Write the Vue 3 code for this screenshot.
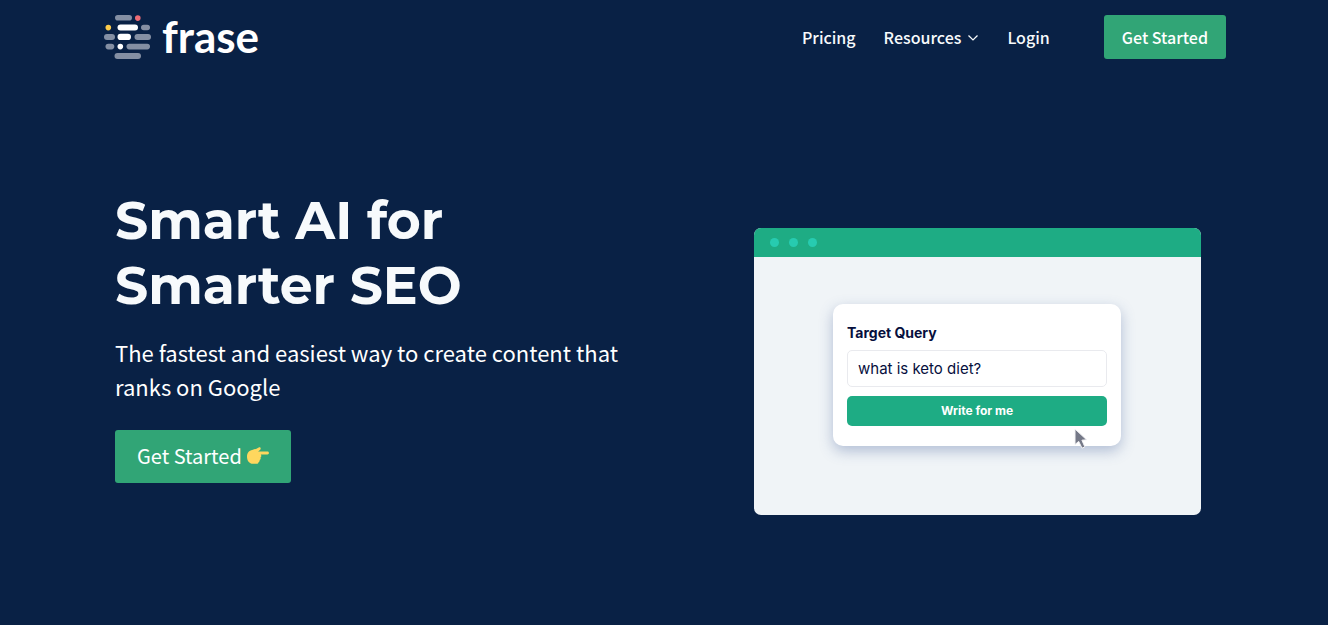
<template>
  <div class="page">
    <header class="site-header">
      <a class="logo" href="#" aria-label="frase">
        <svg class="logo-mark" viewBox="0 0 48 44" aria-hidden="true">
          <rect
            v-for="(bar, index) in logoBars"
            :key="index"
            :x="bar.x"
            :y="bar.y"
            :width="bar.width"
            :height="bar.height"
            :rx="bar.height / 2"
            :fill="bar.color"
          />
        </svg>
        <span class="logo-text">frase</span>
      </a>
      <nav class="nav">
        <a class="nav-link" href="#">Pricing</a>
        <button
          class="nav-link nav-toggle"
          type="button"
          :aria-expanded="resourcesOpen"
          @click="resourcesOpen = !resourcesOpen"
        >
          Resources
          <svg class="chevron" viewBox="0 0 12 12" aria-hidden="true">
            <path d="M1.5 4.5L6 8.9L10.5 4.5" />
          </svg>
        </button>
        <a class="nav-link" href="#">Login</a>
        <a class="btn nav-btn" href="#">Get Started</a>
      </nav>
    </header>

    <main class="hero">
      <section class="hero-text">
        <h1 class="title">Smart AI for<br />Smarter SEO</h1>
        <p class="subtitle">
          The fastest and easiest way to create content that ranks on Google
        </p>
        <a class="btn hero-btn" href="#">
          Get Started
          <svg class="hand" viewBox="0 0 24 20" aria-hidden="true">
            <path
              d="M1 10.5C1 6.5 3.2 4.5 6.2 3.9C8.5 3.2 10.8 2.8 12.7 1.5C13.8 .7 15.1 1.7 14.6 3C14.3 3.9 13.2 4.9 12 5.6H21.5C23.4 5.6 23.4 8.5 21.5 8.5H14.8C15.6 9.4 15.5 10.8 14.5 11.4C15 12.5 14.6 13.6 13.6 14C13.9 15 13.4 16 12.5 16.2C12.4 17.1 11.7 17.8 10.5 17.8H7C3.2 17.8 1 14.7 1 10.5Z"
            />
          </svg>
        </a>
      </section>

      <section class="window">
        <div class="window-bar">
          <span v-for="n in 3" :key="n" class="dot"></span>
        </div>
        <div class="window-body">
          <form class="card" @submit.prevent>
            <label class="card-label" for="query">Target Query</label>
            <input id="query" v-model="query" class="card-input" type="text" />
            <button class="card-btn" type="submit">Write for me</button>
            <svg class="cursor" viewBox="0 0 14 21" aria-hidden="true">
              <path
                d="M1 1V16.5L4.7 13.4L8 20.2L10.9 18.9L7.9 12.2L12.6 11.8Z"
              />
            </svg>
          </form>
        </div>
      </section>
    </main>
  </div>
</template>

<script setup>
import { ref } from "vue";

const query = ref("what is keto diet?");
const resourcesOpen = ref(false);

const grey = "#848fa3";

// rows of the logo mark, top to bottom
const logoBars = [
  { x: 11, y: 0, width: 17, height: 5.6, color: grey },
  { x: 31, y: 0.3, width: 5.6, height: 5.6, color: "#ee6c75" },
  { x: 1.5, y: 9.8, width: 5.6, height: 5.6, color: "#fbcb4b" },
  { x: 13.5, y: 9.5, width: 20.5, height: 6, color: "#ffffff" },
  { x: 37, y: 9.7, width: 9, height: 5.6, color: grey },
  { x: 0, y: 19, width: 11, height: 6, color: grey },
  { x: 13.5, y: 18.8, width: 13.5, height: 6.2, color: "#ffffff" },
  { x: 30.5, y: 19, width: 16.5, height: 6, color: grey },
  { x: 1.5, y: 28.8, width: 8.8, height: 5.6, color: grey },
  { x: 13.5, y: 28.8, width: 5.6, height: 5.6, color: "#ffffff" },
  { x: 22.5, y: 28.8, width: 23.5, height: 5.6, color: grey },
  { x: 10.5, y: 38, width: 26.5, height: 6, color: grey },
];
</script>

<style>
body {
  margin: 0;
  background: #092145;
}
</style>

<style scoped>
.page {
  box-sizing: border-box;
  min-height: 100vh;
  background: #092145;
  color: #ffffff;
  font-family: "Noto Sans CJK SC", "Open Sans", sans-serif;
}

.site-header,
.hero {
  max-width: 1124px;
  margin: 0 auto;
  box-sizing: border-box;
  display: flex;
  justify-content: space-between;
}

.site-header {
  align-items: center;
  padding: 15px 0;
}

.logo {
  display: flex;
  align-items: center;
  gap: 10px;
  padding-left: 2px;
  color: #ffffff;
  text-decoration: none;
}

.logo-mark {
  width: 48px;
  height: 44px;
}

.logo-text {
  padding-bottom: 2px;
  font-family: Lato, sans-serif;
  font-size: 44px;
  font-weight: 700;
  line-height: 42px;
}

.nav {
  display: flex;
  align-items: center;
  gap: 28px;
}

.nav-link {
  color: #f7fafc;
  font-family: inherit;
  font-size: 16px;
  font-weight: 500;
  line-height: 24px;
  text-decoration: none;
}

.nav-toggle {
  display: flex;
  align-items: center;
  gap: 6px;
  padding: 0;
  border: 0;
  background: none;
  cursor: pointer;
}

.chevron {
  width: 12px;
  height: 12px;
  fill: none;
  stroke: #f7fafc;
  stroke-width: 1.3;
}

.btn {
  background: #31a576;
  border-radius: 3px;
  color: #ffffff;
  text-decoration: none;
}

.btn:hover {
  background: #2b9369;
}

.nav-btn {
  margin-left: 26px;
  padding: 10px 18px;
  font-size: 16px;
  font-weight: 500;
  line-height: 24px;
}

.hero {
  align-items: flex-start;
  gap: 40px;
  padding: 114px 25px 60px 13px;
}

.hero-text {
  flex: 0 1 520px;
}

.title {
  margin: 0;
  color: #f7fafc;
  font-family: Montserrat, Inter, sans-serif;
  font-size: 52px;
  font-weight: 700;
  line-height: 65px;
}

.subtitle {
  margin: 17px 0 27px;
  font-size: 22px;
  line-height: 34px;
}

.hero-btn {
  display: inline-flex;
  align-items: center;
  gap: 4px;
  padding: 9px 21px 11px 22px;
  font-size: 20px;
  line-height: 33px;
}

.hand {
  width: 24px;
  height: 20px;
  fill: #ffd75e;
}

.window {
  flex: 0 1 447px;
  margin-top: 40px;
  border-radius: 7px;
  overflow: hidden;
  background: #f0f4f7;
}

.window-bar {
  display: flex;
  align-items: center;
  gap: 10px;
  height: 29px;
  padding-left: 16px;
  background: #1eac84;
}

.dot {
  width: 9px;
  height: 9px;
  border-radius: 50%;
  background: #27cbb0;
}

.window-body {
  padding: 47px 80px 69px 79px;
}

.card {
  position: relative;
  display: flex;
  flex-direction: column;
  padding: 18px 14px 20px;
  border-radius: 10px;
  background: #ffffff;
  box-shadow: 0 5px 14px rgba(60, 90, 150, 0.35);
  font-family: Inter, sans-serif;
}

.card-label {
  margin-bottom: 6px;
  color: #060f3d;
  font-size: 14px;
  font-weight: 700;
  line-height: 22px;
}

.card-input {
  box-sizing: border-box;
  width: 100%;
  height: 37px;
  margin-bottom: 9px;
  padding: 0 10px;
  border: 1px solid #e9eaee;
  border-radius: 5px;
  background: #ffffff;
  color: #060f3d;
  font-family: inherit;
  font-size: 15px;
}

.card-btn {
  height: 30px;
  padding: 0 0 1px;
  border: 0;
  border-radius: 5px;
  background: #1eac84;
  color: #ffffff;
  font-family: inherit;
  font-size: 12px;
  font-weight: 700;
  cursor: pointer;
}

.cursor {
  position: absolute;
  right: 33px;
  bottom: -3px;
  width: 14px;
  height: 21px;
  fill: #747887;
  stroke: #f3f3f5;
  stroke-width: 1;
}

@media (max-width: 900px) {
  .site-header {
    padding: 15px 20px;
  }

  .hero {
    flex-direction: column;
    padding: 60px 20px;
  }

  .hero-text,
  .window {
    flex: none;
    max-width: 100%;
  }
}
</style>
